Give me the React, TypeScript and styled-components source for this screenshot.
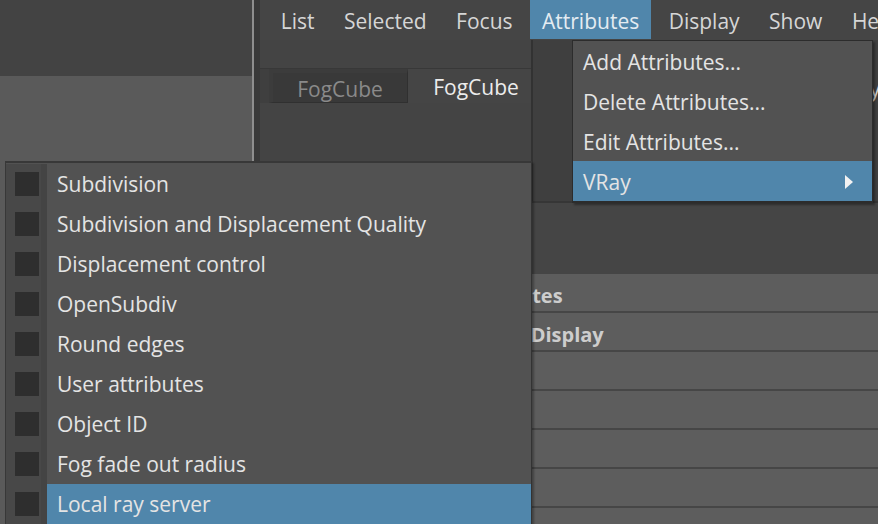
import React from "react";
import styled, { createGlobalStyle } from "styled-components";

const GlobalStyle = createGlobalStyle`
  html, body { margin: 0; padding: 0; background: #444444; overflow: hidden; }
  body { font-family: "Open Sans", "Noto Sans", sans-serif; }
  * { box-sizing: border-box; }
`;

const HIGHLIGHT = "#5086ab";

const Screen = styled.div`
  position: relative;
  width: 878px;
  height: 524px;
  display: flex;
  overflow: hidden;
  background: #444444;
  font-family: "Open Sans", "Noto Sans", sans-serif;
`;

const LeftPane = styled.div`
  width: 252px;
  flex-shrink: 0;
  display: flex;
  flex-direction: column;
`;

const LeftTop = styled.div`
  height: 76px;
  background: #434343;
`;

const LeftBody = styled.div`
  flex: 1;
  background: #5a5a5a;
`;

const Splitter = styled.div`
  width: 8px;
  flex-shrink: 0;
  background: #393939;
  border-left: 2px solid #8e8e8e;
`;

const RightPane = styled.div`
  flex: 1;
  min-width: 0;
  display: flex;
  flex-direction: column;
  background: #454545;
`;

const MenuBar = styled.div`
  height: 40px;
  flex-shrink: 0;
  display: flex;
  padding-left: 6px;
`;

const MenuItem = styled.div<{ $active?: boolean }>`
  height: 39px;
  margin: 0 2.75px;
  padding: 2px 12px 0;
  display: flex;
  align-items: center;
  font-size: 21px;
  color: ${(p) => (p.$active ? "#e4ecf2" : "#d6d6d6")};
  background: ${(p) => (p.$active ? HIGHLIGHT : "transparent")};
  white-space: nowrap;
`;

const Header = styled.div`
  height: 163px;
  flex-shrink: 0;
  display: flex;
  border-bottom: 2px solid #363636;
`;

const TabsPanel = styled.div`
  width: 273px;
  flex-shrink: 0;
  padding-top: 28px;
  border-right: 2px solid #323232;
  background: #444444;
  overflow: hidden;
`;

const TabBar = styled.div`
  height: 35px;
  display: flex;
  padding-left: 9px;
  border-top: 1px solid #383838;
  background: #3f3f3f;
`;

const Tab = styled.div<{ $active?: boolean }>`
  width: ${(p) => (p.$active ? "136px" : "139px")};
  flex-shrink: 0;
  display: flex;
  align-items: center;
  justify-content: center;
  padding-top: 2px;
  font-size: 21px;
  color: ${(p) => (p.$active ? "#ececec" : "#8a8a8a")};
  background: ${(p) => (p.$active ? "#454545" : "#393939")};
  border: ${(p) => (p.$active ? "none" : "1px solid #303030")};
  border-left-width: ${(p) => (p.$active ? "0" : "4px")};
  border-top-width: ${(p) => (p.$active ? "0" : "4px")};
  border-left-color: #3c3c3c;
  border-top-color: #3c3c3c;
`;

const HeaderRest = styled.div`
  flex: 1;
  min-width: 0;
  padding: 31px 0 0 298px;
  background: #3f3f3f;
`;

const ToolLabel = styled.div`
  height: 35px;
  display: flex;
  align-items: center;
  font-size: 21px;
  color: #cfcfcf;
  white-space: nowrap;
`;

const Gap = styled.div`
  height: 71px;
  flex-shrink: 0;
  background: #454545;
`;

const FrameList = styled.div`
  display: flex;
  flex-direction: column;
`;

const FrameRow = styled.div`
  height: 39px;
  flex-shrink: 0;
  display: flex;
  align-items: center;
  gap: 10px;
  padding: 5px 0 0 178px;
  border-bottom: 2px solid #464646;
  background: #5d5d5d;
  font-size: 20px;
  font-weight: 700;
  color: #cdcdcd;
  white-space: nowrap;
`;

const Caret = styled.span`
  width: 0;
  height: 0;
  border-left: 6px solid transparent;
  border-right: 6px solid transparent;
  border-top: 8px solid #bdbdbd;
`;

const Dropdown = styled.div`
  position: absolute;
  left: 572px;
  top: 40px;
  width: 301px;
  border: 1px solid #2c2c2c;
  border-bottom-width: 2px;
  background: #525252;
  box-shadow: 2px 2px 2px rgba(0, 0, 0, 0.35);
`;

const DropItem = styled.div<{ $active?: boolean }>`
  height: 40px;
  display: flex;
  align-items: center;
  justify-content: space-between;
  padding: 1px 19px 0 10px;
  font-size: 21px;
  color: #e4e4e4;
  background: ${(p) => (p.$active ? HIGHLIGHT : "transparent")};
  white-space: nowrap;
`;

const SubMenu = styled.div`
  position: absolute;
  left: 5px;
  top: 161px;
  width: 527px;
  padding-top: 1px;
  border: 1px solid #383838;
  border-top-width: 2px;
  border-right-color: #333333;
  background: #525252;
  box-shadow: 2px 2px 2px rgba(0, 0, 0, 0.3);
`;

const SubRow = styled.div`
  height: 40px;
  display: grid;
  grid-template-columns: 41px 1fr;
`;

const Gutter = styled.div`
  display: flex;
  align-items: center;
  padding-left: 9px;
  background: #484848;
  box-shadow: inset -6px 0 0 #444444;
`;

const CheckBox = styled.div`
  width: 24px;
  height: 24px;
  background: #2e2e2e;
`;

const SubLabel = styled.div<{ $active?: boolean }>`
  display: flex;
  align-items: center;
  padding-left: 10px;
  font-size: 21px;
  color: #e4e4e4;
  background: ${(p) => (p.$active ? HIGHLIGHT : "transparent")};
  white-space: nowrap;
`;

const menuItems = ["List", "Selected", "Focus", "Attributes", "Display", "Show", "Help"];
const dropItems = ["Add Attributes...", "Delete Attributes...", "Edit Attributes...", "VRay"];
const subItems = [
  "Subdivision",
  "Subdivision and Displacement Quality",
  "Displacement control",
  "OpenSubdiv",
  "Round edges",
  "User attributes",
  "Object ID",
  "Fog fade out radius",
  "Local ray server",
];
const frames = ["Attributes", "Object Display", "Pivots", "UUID", "Notes", "Node", "Misc"];

function SubArrow() {
  return (
    <svg width="8" height="14" viewBox="0 0 8 14">
      <polygon points="0,0 8,7 0,14" fill="#f2f2f2" />
    </svg>
  );
}

export default function App() {
  return (
    <>
      <GlobalStyle />
      <Screen>
        <LeftPane>
          <LeftTop />
          <LeftBody />
        </LeftPane>
        <Splitter />
        <RightPane>
          <MenuBar>
            {menuItems.map((m) => (
              <MenuItem key={m} $active={m === "Attributes"}>
                {m}
              </MenuItem>
            ))}
          </MenuBar>
          <Header>
            <TabsPanel>
              <TabBar>
                <Tab>FogCube</Tab>
                <Tab $active>FogCube</Tab>
              </TabBar>
            </TabsPanel>
            <HeaderRest>
              <ToolLabel>Copy Tab</ToolLabel>
            </HeaderRest>
          </Header>
          <Gap />
          <FrameList>
            {frames.map((f) => (
              <FrameRow key={f}>
                <Caret />
                {f}
              </FrameRow>
            ))}
          </FrameList>
        </RightPane>

        <Dropdown>
          {dropItems.map((d) => (
            <DropItem key={d} $active={d === "VRay"}>
              <span>{d}</span>
              {d === "VRay" && <SubArrow />}
            </DropItem>
          ))}
        </Dropdown>

        <SubMenu>
          {subItems.map((s, i) => (
            <SubRow key={s}>
              <Gutter>
                <CheckBox />
              </Gutter>
              <SubLabel $active={i === subItems.length - 1}>{s}</SubLabel>
            </SubRow>
          ))}
        </SubMenu>
      </Screen>
    </>
  );
}
